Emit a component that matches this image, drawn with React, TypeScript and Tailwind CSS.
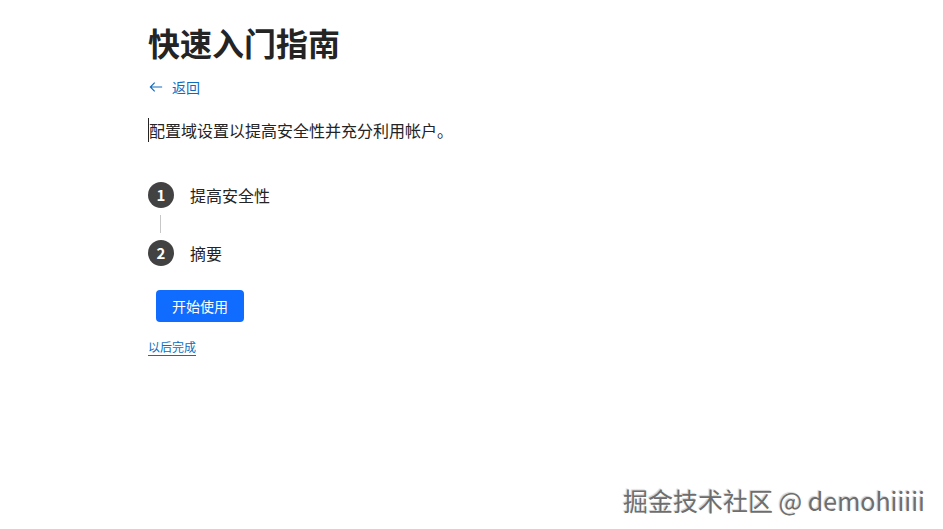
import React from "react";

const font = { fontFamily: '"Noto Sans CJK SC", "Noto Sans", sans-serif' };

const steps = ["提高安全性", "摘要"];

const App: React.FC = () => (
  <div className="relative h-[529px] w-[943px] overflow-hidden bg-white text-[#242424]" style={font}>
    <div className="flex flex-col items-start pl-[148px] pt-[20px]">
      <h1 className="text-[32px] font-bold leading-[44px]">快速入门指南</h1>

      <a href="#" className="mt-[13px] flex items-center gap-[9px] pl-[1px] text-[14px] leading-[20px] text-[#0f6cbd]">
        <svg width="14" height="14" viewBox="0 0 16 16" fill="none" stroke="currentColor" strokeWidth="1.3">
          <path d="M15 8H1.5M6.5 3L1.5 8L6.5 13" />
        </svg>
        返回
      </a>

      <p className="mt-[21px] border-l border-[#242424] text-[16px] leading-[24px]">配置域设置以提高安全性并充分利用帐户。</p>

      <ol className="mt-[40px] flex flex-col">
        {steps.map((s, i) => (
          <li key={s} className="flex flex-col">
            {i > 0 && <div className="my-[7px] ml-[12px] h-[18px] w-px bg-[#c7c7c7]" />}
            <div className="flex items-center gap-[16px]">
              <span className="flex h-[26px] w-[26px] items-center justify-center rounded-full bg-[#424242] text-[15px] font-bold text-white">
                {i + 1}
              </span>
              <span className="text-[16px] leading-[26px] text-[#242424]">{s}</span>
            </div>
          </li>
        ))}
      </ol>

      <button className="ml-[8px] mt-[24px] h-[32px] w-[88px] rounded-[4px] bg-[#0f6cff] text-[14px] text-white">
        开始使用
      </button>

      <a href="#" className="mt-[17px] text-[12px] leading-[16px] text-[#0f6cbd] underline underline-offset-[3px]">
        以后完成
      </a>
    </div>

    <div
      className="absolute bottom-[13px] right-[18px] text-[25px] leading-[32px] text-[#6e6e6e]"
      style={{ textShadow: "1px 1px 1px #ffffff, -1px -1px 1px #d0d0d0" }}
    >
      掘金技术社区 @ demohiiiii
    </div>
  </div>
);

export default App;
